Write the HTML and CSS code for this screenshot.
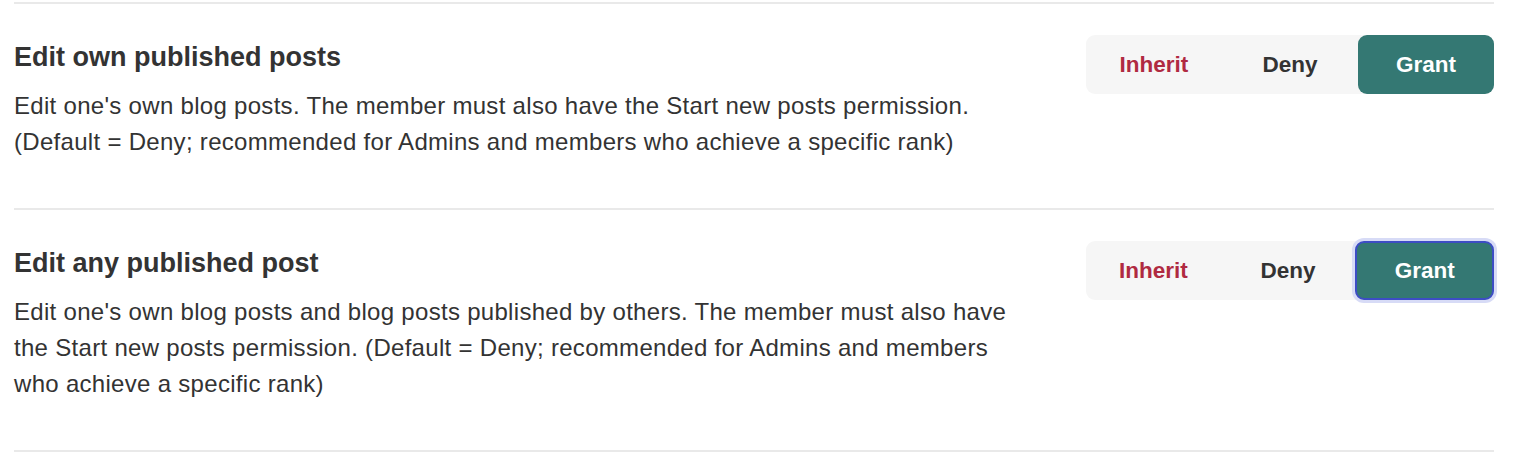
FILE: index.html
```html
<!DOCTYPE html>
<html lang="en">
<head>
<meta charset="utf-8">
<title>Permissions</title>
<link rel="stylesheet" href="styles.css">
</head>
<body>
<div class="list">
  <div class="row">
    <div class="text">
      <h3 class="title">Edit own published posts</h3>
      <p class="desc">Edit one's own blog posts. The member must also have the Start new posts permission. (Default = Deny; recommended for Admins and members who achieve a specific rank)</p>
    </div>
    <div class="toggle">
      <button class="opt inherit">Inherit</button>
      <button class="opt deny">Deny</button>
      <button class="opt grant active">Grant</button>
    </div>
  </div>
  <div class="row">
    <div class="text">
      <h3 class="title">Edit any published post</h3>
      <p class="desc">Edit one's own blog posts and blog posts published by others. The member must also have the Start new posts permission. (Default = Deny; recommended for Admins and members who achieve a specific rank)</p>
    </div>
    <div class="toggle">
      <button class="opt inherit">Inherit</button>
      <button class="opt deny">Deny</button>
      <button class="opt grant active focused">Grant</button>
    </div>
  </div>
</div>
</body>
</html>
```
FILE: styles.css
```css
* { box-sizing: border-box; }
html, body { margin: 0; padding: 0; background: #fff; }
body {
  font-family: "Liberation Sans", Arial, Helvetica, sans-serif;
  color: #333;
}
.list {
  margin: 2px 46px 0 14px;
  border-top: 2px solid #e9e9e9;
}
.row {
  display: flex;
  justify-content: space-between;
  align-items: flex-start;
  padding: 31px 0 48px;
  border-bottom: 2px solid #e9e9e9;
}
.text { width: 1000px; padding-top: 2px; }
.title {
  margin: 0 0 11px;
  font-size: 27px;
  line-height: 40px;
  font-weight: 700;
  color: #333;
}
.desc {
  margin: 0;
  font-size: 24px;
  line-height: 36px;
  letter-spacing: 0.3px;
  color: #333;
}
.toggle {
  display: flex;
  width: 408px;
  height: 59px;
  background: #f6f6f6;
  border-radius: 9px;
}
.opt {
  flex: 1;
  border: 0;
  background: transparent;
  font-family: inherit;
  font-size: 22.5px;
  font-weight: 700;
  border-radius: 9px;
  padding: 0;
  cursor: pointer;
}
.inherit { color: #b02a41; }
.deny { color: #333; }
.grant { color: #fff; }
.active { background: #347873; }
.focused {
  border: 2px solid #3d4dc4;
  box-shadow: 0 0 0 3px #d7dbf6;
}
```
